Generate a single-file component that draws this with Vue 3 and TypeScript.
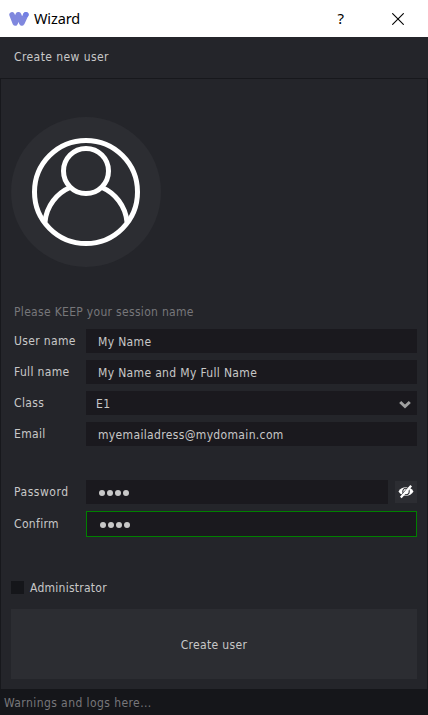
<script setup lang="ts">
import { ref } from 'vue'

const userName = ref('My Name')
const fullName = ref('My Name and My Full Name')
const userClass = ref('E1')
const email = ref('myemailadress@mydomain.com')
const passwordLength = 4
</script>

<template>
  <div class="window">
    <header class="titlebar">
      <svg class="logo" width="20" height="16" viewBox="0 0 20 16">
        <g fill="none" stroke="#7f87de" stroke-width="5.4" stroke-linecap="round" stroke-linejoin="round">
          <path d="M3 3.700 L6.200 12 M9.200 3.700 L6.200 12 M9.600 3.700 L12.800 12 M16.800 3.700 L13 12" />
        </g>
        <circle cx="17" cy="3.600" r="2.700" fill="#7380e4" />
      </svg>
      <span class="app-name">Wizard</span>
      <span class="help">?</span>
      <svg class="close" width="12" height="12" viewBox="0 0 12 12">
        <path d="M0.300 0.300 L11.700 11.700 M11.700 0.300 L0.300 11.700" stroke="#000" stroke-width="1.100" />
      </svg>
    </header>
    <div class="heading"><span class="t-heading">Create new user</span></div>
    <main class="panel">
      <div class="avatar">
        <svg width="150" height="150" viewBox="0 0 150 150" fill="none" stroke="#fff" stroke-width="5">
          <circle cx="75" cy="75" r="51.500" />
          <circle cx="75" cy="54" r="22.500" />
          <path d="M59 70.500 C46 76 35.500 89 34 105 M91 70.500 C104 76 114.500 89 116 105" />
        </svg>
      </div>
      <p class="hint"><span class="t-hint">Please KEEP your session name</span></p>
      <div class="row"><label>User name</label><div class="field"><span>{{ userName }}</span></div></div>
      <div class="row"><label>Full name</label><div class="field"><span>{{ fullName }}</span></div></div>
      <div class="row">
        <label>Class</label>
        <div class="field select">
          <span>{{ userClass }}</span>
          <svg width="12" height="9" viewBox="0 0 12 9"><path d="M1.200 2 L6 6.500 L10.800 2" fill="none" stroke="#a0a0a0" stroke-width="3" /></svg>
        </div>
      </div>
      <div class="row"><label>Email</label><div class="field"><span>{{ email }}</span></div></div>
      <div class="row password">
        <label class="t-password">Password</label>
        <div class="field dots"><i v-for="n in passwordLength" :key="n" /></div>
        <button class="eye" aria-label="Show password">
          <svg width="16" height="14" viewBox="0 0 16 14">
            <path d="M0.500 6.500 C3.500 0.900 12.500 0.900 15.500 6.500 C12.500 12.100 3.500 12.100 0.500 6.500 Z" fill="#fff" />
            <circle cx="8" cy="6.500" r="3.200" fill="none" stroke="#2c2d32" stroke-width="1.100" />
            <path d="M2.200 11.400 L12 0" stroke="#2c2d32" stroke-width="1" />
            <path d="M2.800 12.500 L13.200 0.700" stroke="#fff" stroke-width="2.200" />
          </svg>
        </button>
      </div>
      <div class="row confirm">
        <label>Confirm</label>
        <div class="field dots valid"><i v-for="n in passwordLength" :key="n" /></div>
      </div>
      <div class="admin"><span class="box" /><label class="t-admin">Administrator</label></div>
      <button class="create"><span>Create user</span></button>
    </main>
    <footer class="status"><span class="t-status">Warnings and logs here...</span></footer>
  </div>
</template>

<style>
body { margin: 0; background: #24252a; }
</style>

<style scoped>
* { box-sizing: border-box; }
.window {
  width: 428px; height: 715px; display: flex; flex-direction: column;
  background: #24252a; color: #c8c8c8; overflow: hidden;
  font: 12px/16px "DejaVu Sans Condensed", "DejaVu Sans", sans-serif;
  font-stretch: condensed; white-space: nowrap; letter-spacing: 0.34px;
}
button { border: 0; padding: 0; font: inherit; color: inherit; letter-spacing: inherit; }
.titlebar { height: 37px; background: #fff; display: flex; align-items: center; padding: 0 24px 0 9px; color: #000; font: 15px/20px "Noto Sans", sans-serif; letter-spacing: 0; }
.logo { margin-right: 5px; }
.app-name { font-size: 14.5px; letter-spacing: -0.12px; padding-bottom: 1px; }
.help { margin-left: auto; margin-right: 48px; padding-bottom: 2px; }
.heading { height: 41px; padding: 12px 14px; }
.t-heading, .t-status { letter-spacing: 0.42px; }
.t-hint { letter-spacing: 0.31px; }
.t-password { letter-spacing: 0.52px; }
.t-admin { letter-spacing: 0.25px; }
.panel { height: 611px; border: 1px solid #17181c; border-bottom: 0; padding: 38px 10px 0; }
.avatar { width: 150px; height: 150px; border-radius: 50%; background: #2c2d32; }
.avatar svg { display: block; }
.hint { margin: 37px 0 9px; padding-left: 3px; color: #77777a; }
.row { display: flex; height: 24px; margin-bottom: 7px; }
.row label { width: 75px; padding-left: 3px; padding-top: 4px; flex: none; }
.field { flex: 1; background: #1a191e; padding: 5px 12px 0; }
.select { display: flex; justify-content: space-between; padding: 5px 6px 0 10px; }
.select svg { margin-top: 4px; }
.password { margin-top: 34px; }
.dots { display: flex; gap: 2px; align-items: center; padding: 2px 13px 0; }
.dots i { width: 6px; height: 6px; border-radius: 3px; background: #c8c8c8; }
.eye { width: 22px; height: 22px; margin: 1px 0 0 7px; background: #2c2d32; display: flex; align-items: center; justify-content: center; padding-bottom: 1px; }
.confirm { height: 26px; margin: 0; }
.confirm label { padding-top: 5px; }
.valid { border: 1px solid #008000; }
.admin { display: flex; margin-top: 42px; height: 17px; align-items: center; }
.box { width: 13px; height: 13px; margin-right: 6px; background: #15161a; }
.create { display: block; width: 406px; height: 70px; margin-top: 13px; padding-top: 1px; background: #2c2d32; }
.status { height: 26px; padding: 6px 4px; background: #15161a; color: #77777a; }
</style>
